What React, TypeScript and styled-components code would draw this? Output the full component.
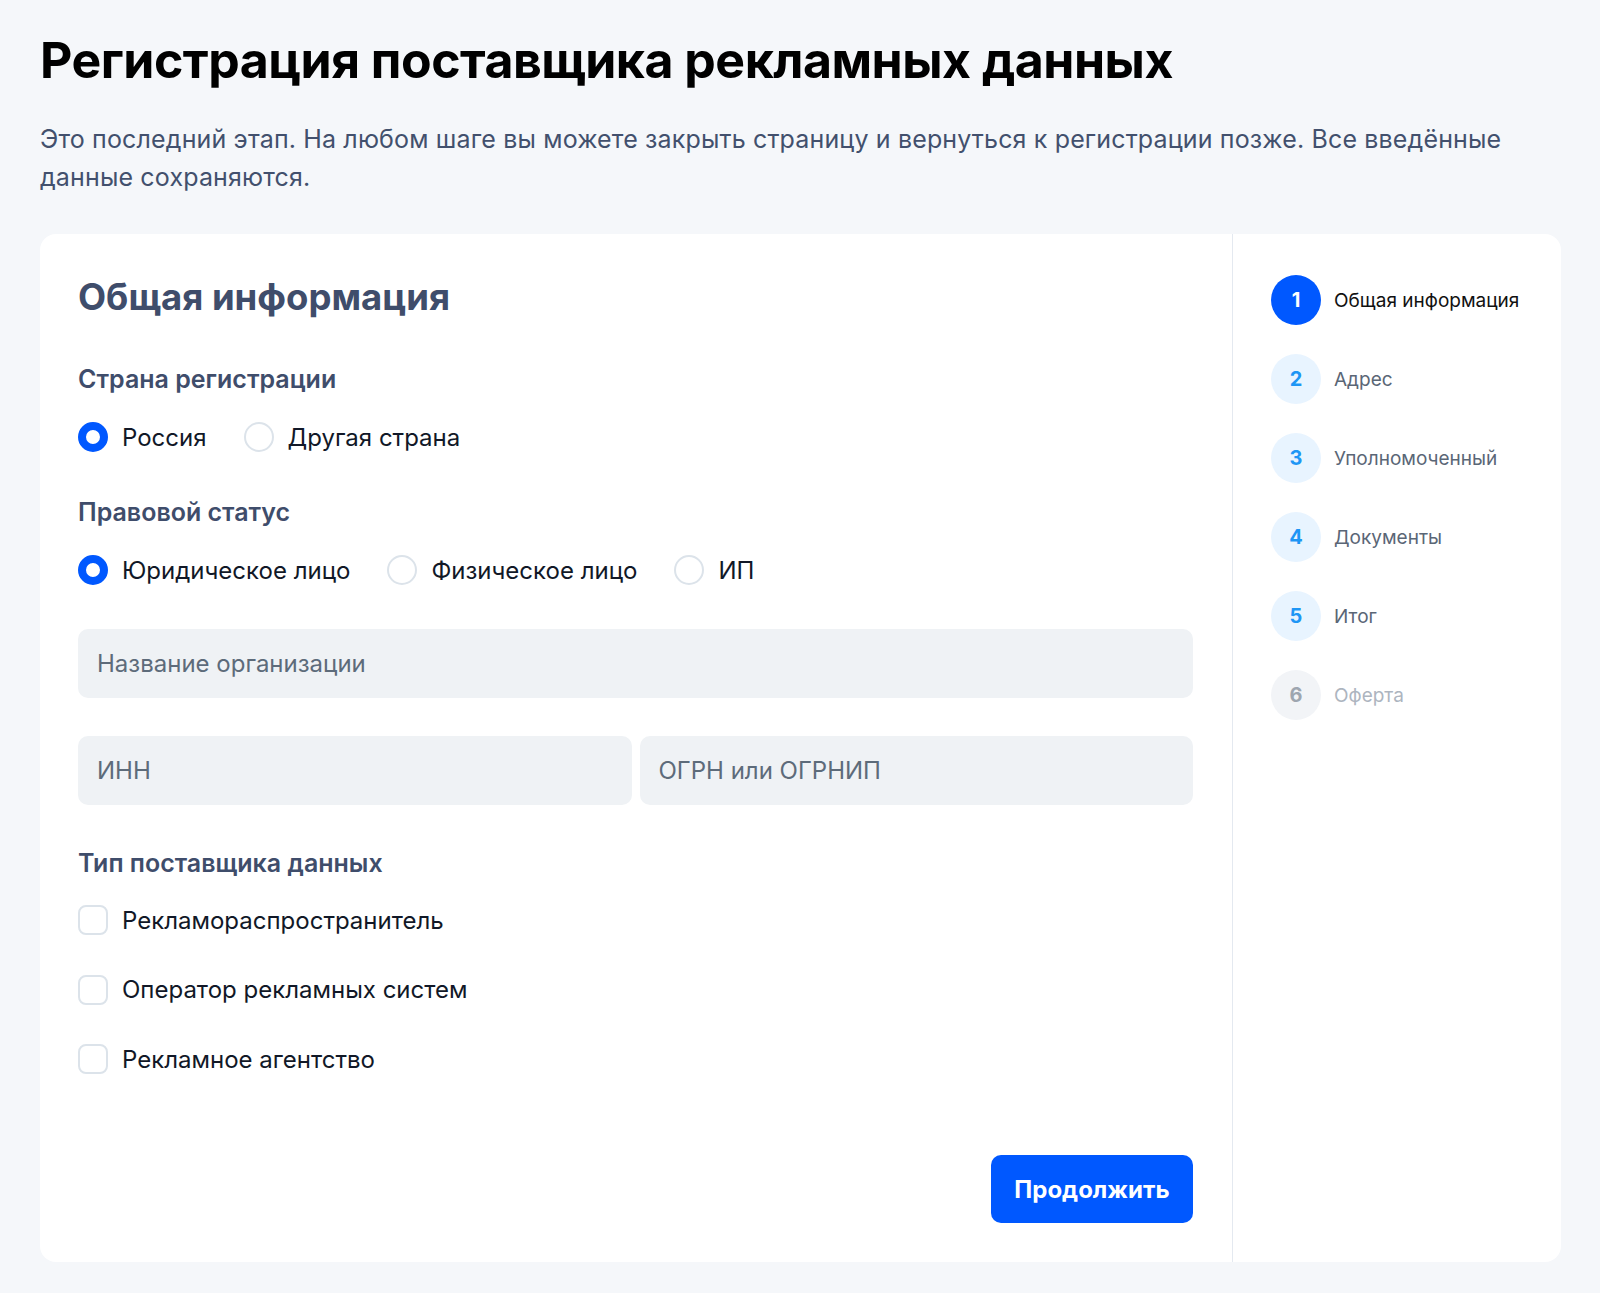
import React from 'react';
import styled, { createGlobalStyle } from 'styled-components';

const GlobalStyle = createGlobalStyle`
  * {
    box-sizing: border-box;
  }
  body {
    margin: 0;
    background-color: #f5f7fa;
    font-family: Inter, 'Noto Sans', 'Liberation Sans', sans-serif;
    color: #111827;
  }
`;

type StepState = 'active' | 'pending' | 'disabled';

interface Step {
  num: number;
  title: string;
  state: StepState;
}

const steps: Step[] = [
  { num: 1, title: 'Общая информация', state: 'active' },
  { num: 2, title: 'Адрес', state: 'pending' },
  { num: 3, title: 'Уполномоченный', state: 'pending' },
  { num: 4, title: 'Документы', state: 'pending' },
  { num: 5, title: 'Итог', state: 'pending' },
  { num: 6, title: 'Оферта', state: 'disabled' },
];

const App = () => {
  return (
    <Page>
      <GlobalStyle />
      <Title>Регистрация поставщика рекламных данных</Title>
      <Lead>
        Это последний этап. На любом шаге вы можете закрыть страницу и вернуться к регистрации
        позже. Все введённые данные сохраняются.
      </Lead>

      <Card>
        <Main>
          <Heading>Общая информация</Heading>

          <SectionLabel>Страна регистрации</SectionLabel>
          <RadioGroup>
            <Option>
              <Radio checked />
              Россия
            </Option>
            <Option>
              <Radio />
              Другая страна
            </Option>
          </RadioGroup>

          <SectionLabel>Правовой статус</SectionLabel>
          <RadioGroup>
            <Option>
              <Radio checked />
              Юридическое лицо
            </Option>
            <Option>
              <Radio />
              Физическое лицо
            </Option>
            <Option>
              <Radio />
              ИП
            </Option>
          </RadioGroup>

          <Fields>
            <Input placeholder="Название организации" />
            <FieldRow>
              <Input placeholder="ИНН" />
              <Input placeholder="ОГРН или ОГРНИП" />
            </FieldRow>
          </Fields>

          <SectionLabel>Тип поставщика данных</SectionLabel>
          <CheckList>
            <Option>
              <Checkbox />
              Рекламораспространитель
            </Option>
            <Option>
              <Checkbox />
              Оператор рекламных систем
            </Option>
            <Option>
              <Checkbox />
              Рекламное агентство
            </Option>
          </CheckList>

          <Footer>
            <SubmitButton type="button">Продолжить</SubmitButton>
          </Footer>
        </Main>

        <Sidebar>
          {steps.map((step) => (
            <StepItem key={step.num}>
              <StepCircle state={step.state}>{step.num}</StepCircle>
              <StepTitle state={step.state}>{step.title}</StepTitle>
            </StepItem>
          ))}
        </Sidebar>
      </Card>
    </Page>
  );
};

const Page = styled.div`
  padding: 30px 39px 32px 40px;
`;

const Title = styled.h1`
  margin: 0;
  font-size: 50px;
  line-height: 60px;
  font-weight: 700;
  letter-spacing: -0.5px;
  color: #000000;
`;

const Lead = styled.p`
  margin: 30px 0 0;
  max-width: 1500px;
  font-size: 25px;
  line-height: 38px;
  letter-spacing: 0.15px;
  color: #42506d;
`;

const Card = styled.div`
  display: flex;
  margin-top: 38px;
  background-color: #ffffff;
  border-radius: 16px;
`;

const Main = styled.div`
  flex: 1;
  display: flex;
  flex-direction: column;
  padding: 41px 39px 39px 38px;
  border-right: 1px solid #e4e9f0;
`;

const Heading = styled.h2`
  margin: 0 0 44px;
  font-size: 36.5px;
  line-height: 44px;
  font-weight: 700;
  color: #3f4d6b;
`;

const SectionLabel = styled.div`
  font-size: 25px;
  line-height: 32px;
  font-weight: 600;
  color: #3f4d6b;
`;

const RadioGroup = styled.div`
  display: flex;
  gap: 37px;
  margin: 27px 0 44px;
`;

const Option = styled.label`
  display: flex;
  align-items: center;
  gap: 14px;
  height: 30px;
  font-size: 24px;
  color: #111827;
`;

const Radio = styled.span<{ checked?: boolean }>`
  flex: none;
  width: 30px;
  height: 30px;
  border-radius: 50%;
  border: ${({ checked }) => (checked ? '8px solid #0058ff' : '2px solid #dce3ea')};
  background-color: #ffffff;
`;

const Checkbox = styled.span`
  flex: none;
  width: 30px;
  height: 30px;
  border-radius: 8px;
  border: 2px solid #dce3ea;
  background-color: #ffffff;
`;

const Fields = styled.div`
  display: flex;
  flex-direction: column;
  gap: 38px;
  margin: 0 0 42px;
`;

const FieldRow = styled.div`
  display: grid;
  grid-template-columns: 1fr 1fr;
  gap: 8px;
`;

const Input = styled.input`
  width: 100%;
  height: 69px;
  padding: 0 19px;
  border: none;
  border-radius: 10px;
  background-color: #eff2f5;
  font-family: inherit;
  font-size: 24px;
  color: #111827;
  outline: none;

  &::placeholder {
    color: #5d6b7a;
  }
`;

const CheckList = styled.div`
  display: flex;
  flex-direction: column;
  gap: 39.5px;
  margin-top: 26px;
`;

const Footer = styled.div`
  display: flex;
  justify-content: flex-end;
  margin-top: 81px;
`;

const SubmitButton = styled.button`
  height: 68px;
  width: 202px;
  padding: 0;
  border: none;
  border-radius: 10px;
  background-color: #0058ff;
  font-family: inherit;
  font-size: 24px;
  font-weight: 700;
  color: #ffffff;
`;

const Sidebar = styled.div`
  width: 328px;
  display: flex;
  flex-direction: column;
  gap: 29px;
  padding: 41px 30px 40px 38px;
`;

const StepItem = styled.div`
  display: flex;
  align-items: center;
  gap: 13px;
`;

const circleColors: Record<StepState, { bg: string; fg: string }> = {
  active: { bg: '#0058ff', fg: '#ffffff' },
  pending: { bg: '#e8f4ff', fg: '#1e96f5' },
  disabled: { bg: '#f2f4f7', fg: '#9ea6b0' },
};

const titleColors: Record<StepState, string> = {
  active: '#111111',
  pending: '#5a6676',
  disabled: '#adb5bf',
};

const StepCircle = styled.div<{ state: StepState }>`
  flex: none;
  display: flex;
  align-items: center;
  justify-content: center;
  width: 50px;
  height: 50px;
  border-radius: 50%;
  background-color: ${({ state }) => circleColors[state].bg};
  color: ${({ state }) => circleColors[state].fg};
  font-size: 20px;
  font-weight: 700;
`;

const StepTitle = styled.div<{ state: StepState }>`
  font-size: 19px;
  color: ${({ state }) => titleColors[state]};
`;

export default App;
